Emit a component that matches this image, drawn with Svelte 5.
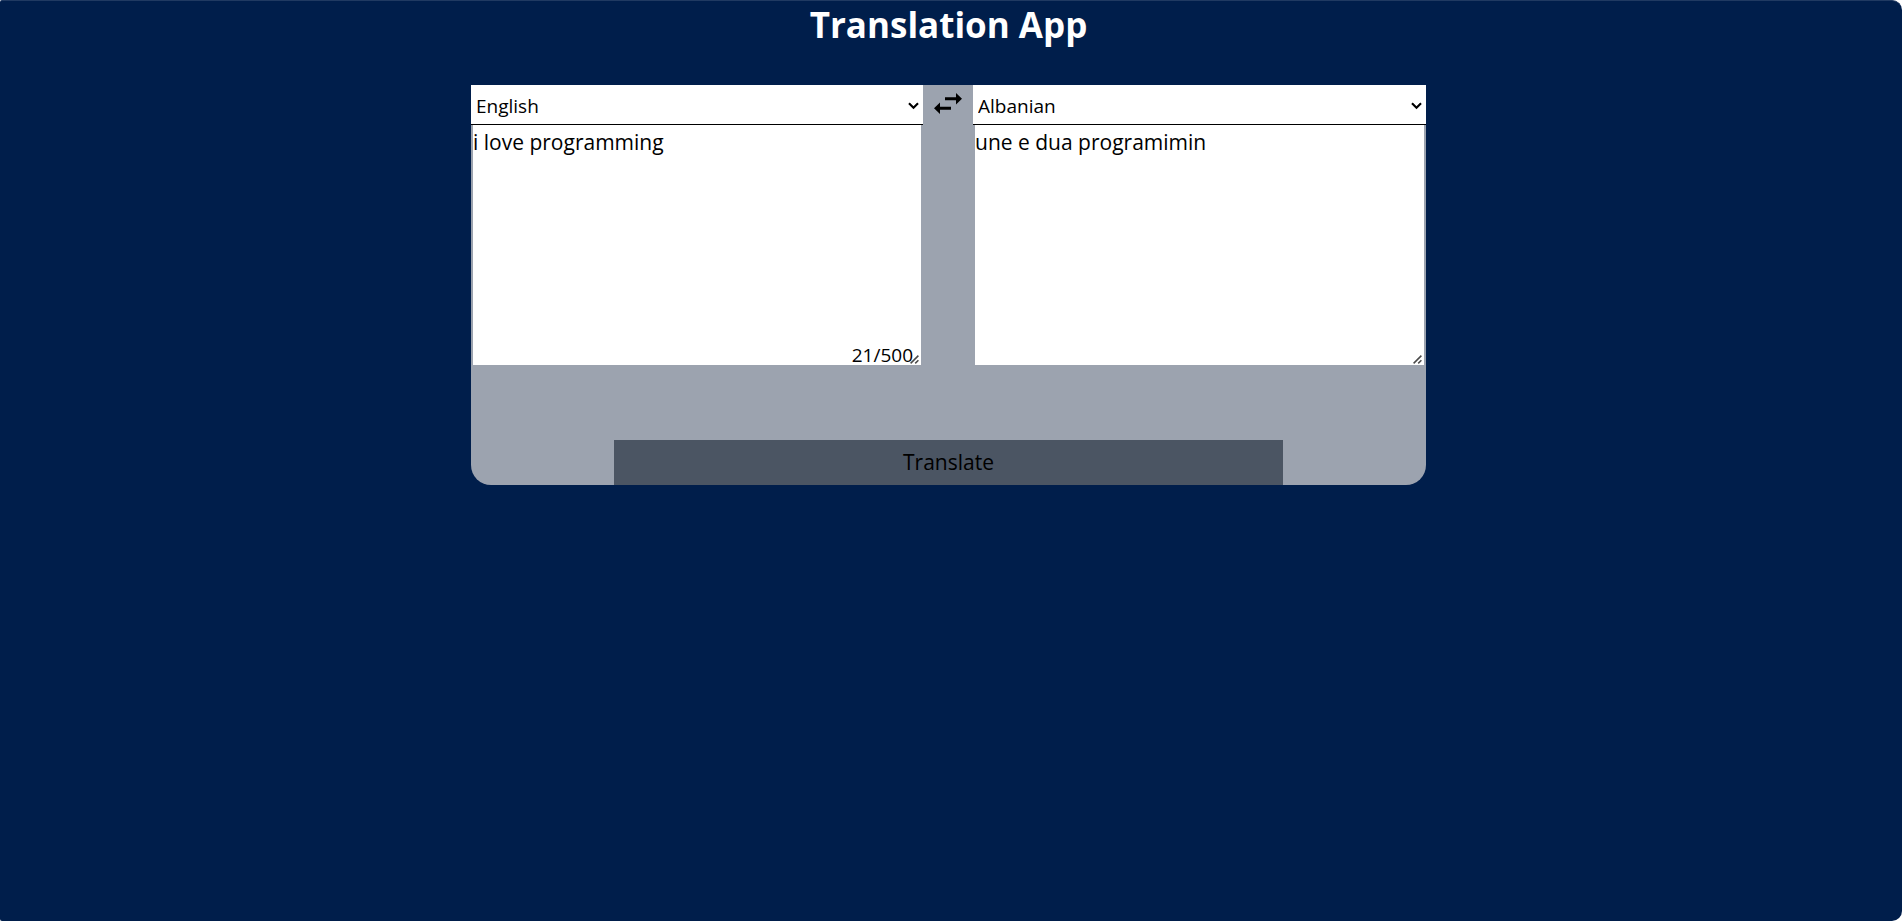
<script>
  let source = $state('i love programming');
  let result = $state('une e dua programimin');
  let from = $state('English');
  let to = $state('Albanian');
  let used = $state(21);
  const limit = 500;
  const languages = ['English', 'Albanian'];

  function swap() {
    [from, to] = [to, from];
    [source, result] = [result, source];
  }
</script>

{#snippet chevron()}
  <svg class="chevron" viewBox="0 0 11 8" width="11" height="8" aria-hidden="true">
    <path d="M1 1.3l4.5 4.5L10 1.3" />
  </svg>
{/snippet}

{#snippet grip()}
  <svg class="grip" viewBox="0 0 9 9" width="9" height="9" aria-hidden="true">
    <path d="M.6 8.4l7.8-7.8M5.2 8.4l3.2-3.2" />
  </svg>
{/snippet}

<div class="page">
  <main>
    <h1>Translation App</h1>
    <section class="card">
      <div class="panels">
        <div class="panel">
          <div class="picker">
            <select aria-label="Source language" bind:value={from}>
              {#each languages as language}<option>{language}</option>{/each}
            </select>
            {@render chevron()}
          </div>
          <div class="field">
            <textarea aria-label="Source text" spellcheck="false" bind:value={source} oninput={() => (used = source.length)}></textarea>
            <span class="count">{used}/{limit}</span>
            {@render grip()}
          </div>
        </div>
        <button class="swap" type="button" aria-label="Swap languages" onclick={swap}>
          <svg viewBox="0 0 28 21" width="28" height="21" aria-hidden="true">
            <path d="M11 4.3h11V0l6 5.8-6 5.7V7.3H11zM17 13.8H6V9.5l-6 5.8L6 21v-4.2h11z" />
          </svg>
        </button>
        <div class="panel">
          <div class="picker">
            <select aria-label="Target language" bind:value={to}>
              {#each languages as language}<option>{language}</option>{/each}
            </select>
            {@render chevron()}
          </div>
          <div class="field">
            <textarea aria-label="Translated text" spellcheck="false" bind:value={result}></textarea>
            {@render grip()}
          </div>
        </div>
      </div>
      <button class="translate" type="button">Translate</button>
    </section>
  </main>
</div>

<style>
  :global(body) {
    margin: 0;
    background: #fff;
  }
  .page {
    box-sizing: border-box;
    min-height: 100vh;
    padding-right: 5px;
    border-top: 1px solid #203a62;
    border-radius: 2px 10px 10px 2px;
    background: #001e4b;
    font-family: 'Segoe UI', 'Open Sans', 'Noto Sans', sans-serif;
    color: #000;
  }
  main {
    display: flex;
    flex-direction: column;
    align-items: center;
    gap: 36px;
  }
  h1 {
    margin: 0;
    font-size: 35px;
    line-height: 48px;
    font-weight: 700;
    color: #fff;
  }
  .card {
    display: flex;
    flex-direction: column;
    align-items: center;
    justify-content: space-between;
    width: 100%;
    max-width: 955px;
    min-height: 400px;
    overflow: hidden;
    border-radius: 0 0 20px 20px;
    background: #9ca3af;
  }
  .panels {
    display: grid;
    grid-template-columns: 452fr 50px 453fr;
    align-items: start;
    width: 100%;
  }
  .panel {
    min-width: 0;
  }
  .picker,
  .field {
    position: relative;
  }
  select {
    display: block;
    appearance: none;
    box-sizing: border-box;
    width: 100%;
    height: 40px;
    padding: 2px 20px 0 5px;
    border: 0;
    border-bottom: 1px solid #000;
    border-radius: 0;
    background: #fff;
    color: #000;
    font: 19px 'Segoe UI', 'Open Sans', 'Noto Sans', sans-serif;
    outline: none;
  }
  .chevron {
    position: absolute;
    top: 17px;
    right: 4px;
    fill: none;
    stroke: #000;
    stroke-width: 2.2;
    pointer-events: none;
  }
  .field {
    margin: 0 2px;
  }
  textarea {
    display: block;
    box-sizing: border-box;
    width: 100%;
    height: 240px;
    padding: 1px 0;
    border: 0;
    background: #fff;
    color: #000;
    font: 21px/32px 'Segoe UI', 'Open Sans', 'Noto Sans', sans-serif;
    outline: none;
  }
  textarea::-webkit-resizer {
    background: transparent;
  }
  .grip {
    position: absolute;
    right: 2px;
    bottom: 1px;
    fill: none;
    stroke: #4a4a4a;
    stroke-width: 1.5;
    pointer-events: none;
  }
  .count {
    position: absolute;
    right: 8px;
    bottom: 0;
    font-size: 19px;
    line-height: 20px;
    pointer-events: none;
  }
  button {
    padding: 0;
    border: 0;
    color: #000;
    font: 21px 'Segoe UI', 'Open Sans', 'Noto Sans', sans-serif;
    cursor: pointer;
  }
  .swap {
    display: flex;
    align-items: center;
    justify-content: center;
    height: 37px;
    background: transparent;
  }
  .translate {
    width: 70%;
    height: 45px;
    padding-bottom: 1px;
    background: #4b5563;
  }
</style>
